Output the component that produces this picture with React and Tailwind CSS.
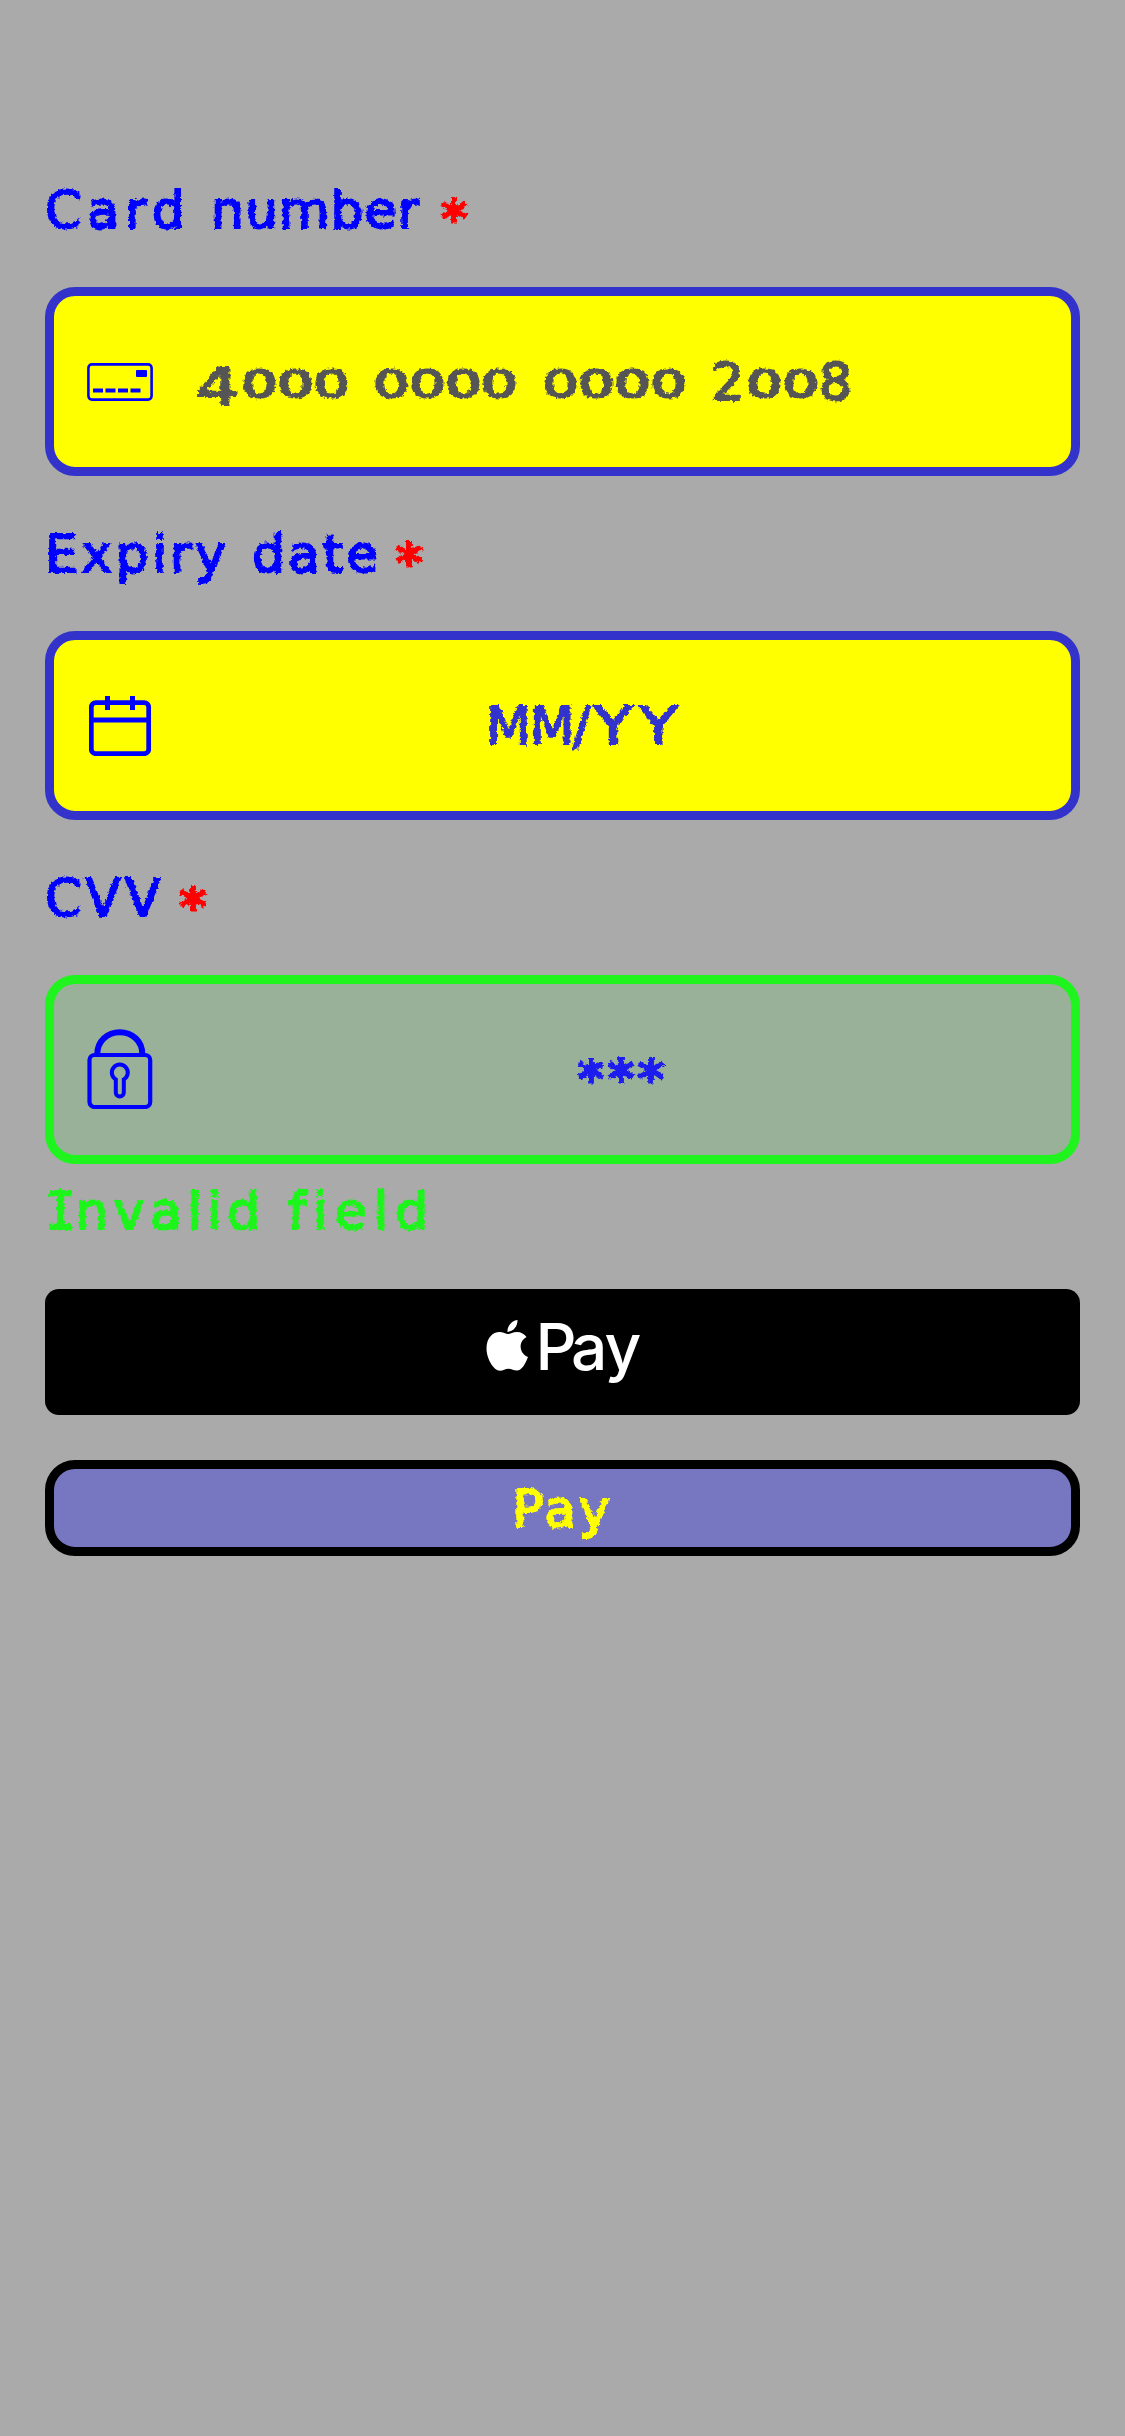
import React from "react";

const chalk =
  "font-['DejaVu_Sans',sans-serif] text-[52px] leading-[60px] whitespace-pre [filter:url(#chalk)]";

function ChalkFilter() {
  return (
    <svg width="0" height="0" className="absolute" aria-hidden="true">
      <filter id="chalk" x="-5%" y="-20%" width="110%" height="140%">
        <feTurbulence type="fractalNoise" baseFrequency="0.3" numOctaves="2" seed="4" result="noise" />
        <feDisplacementMap in="SourceGraphic" in2="noise" scale="5" xChannelSelector="R" yChannelSelector="G" />
      </filter>
    </svg>
  );
}

function Star({ className = "" }) {
  return <span className={`inline-block w-[30px] translate-x-px translate-y-[9px] [-webkit-text-stroke:3px_currentColor] ${className}`}>*</span>;
}

function Label({ words }) {
  return (
    <div className={`${chalk} flex h-[155px] pt-[48px] text-[#0000ff] [-webkit-text-stroke:2px_currentColor]`}>
      {words.map(([text, cls]) => (
        <span key={text} className={cls}>{text}</span>
      ))}
      <Star className="text-[#ff0000]" />
    </div>
  );
}

function Field({ className, icon, children }) {
  return (
    <div className={`flex h-[189px] items-center rounded-[30px] border-[9px] ${className}`}>
      <div className="ml-[33px] flex w-[66px] shrink-0 justify-center">{icon}</div>
      {children}
    </div>
  );
}

function CardIcon() {
  return (
    <svg width="66" height="38" viewBox="0 0 66 38" fill="none" className="block">
      <rect x="1.4" y="1.4" width="63.2" height="35.2" rx="3.5" stroke="#0000ff" strokeWidth="2.6" />
      <rect x="49" y="7" width="11" height="7" rx="1" fill="#0000ff" />
      <path d="M6 25.5h10v4H6zM18.5 25.5h10v4h-10zM31 25.5h10v4H31zM43.5 25.5h10v4h-10z" fill="#0000ff" />
    </svg>
  );
}

function CalendarIcon() {
  return (
    <svg width="62" height="60" viewBox="0 0 62 60" fill="none" stroke="#0000ff" className="block">
      <rect x="2.3" y="6.7" width="57.4" height="51" rx="4.5" strokeWidth="4.8" />
      <path d="M2 24h58" strokeWidth="5.2" />
      <path d="M18.5 0v14M43.5 0v14" strokeWidth="5" />
    </svg>
  );
}

function LockIcon() {
  return (
    <svg width="66" height="80" viewBox="0 0 66 80" fill="none" stroke="#0000ff" className="mb-[2px] block">
      <path d="M10.3 25C10.3 12 20.5 3.2 32.8 3.2S55.3 12 55.3 25" strokeWidth="6" />
      <rect x="2.5" y="26" width="60.7" height="52" rx="5" strokeWidth="4.2" />
      <path d="M28.8 50.5A8 8 0 1 1 36.8 50.5V63.5a4 4 0 0 1-8 0Z" strokeWidth="4" />
    </svg>
  );
}

function ApplePayLogo() {
  return (
    <svg width="156" height="80" viewBox="0 0 156 80" fill="#fff" className="block overflow-visible">
      <path d="M32.5 0C32.8 6 28.5 11.6 22.5 11.9C22.1 6 27 0.6 32.5 0Z" />
      <path d="M23 14C25.5 14 28 12 32 12C36 12 39.5 14 41.5 17C32.5 22 34.5 34 43 37C40.5 44 36.5 50.5 32 50.5C28.5 50.5 27 48.7 23.5 48.7C20 48.7 18.3 50.7 15 50.7C8.5 50.7 1.5 38.5 1.5 28.5C1.5 17.5 8 12 14.5 12C18 12 21 14 23 14Z" />
      <text x="50.5 86 119.5" y="50" fontSize="64" fontFamily="Inter, sans-serif" fontWeight="500">Pay</text>
    </svg>
  );
}

function Digits({ text, className }) {
  return (
    <span className={`flex ${className}`}>
      {text.split("").map((d, i) =>
        d === "0" ? (
          <span key={i} className="w-[36px] origin-[50%_48px] translate-x-px -translate-y-[3px] scale-x-110 scale-y-[0.7] [-webkit-text-stroke:3px_currentColor]">0</span>
        ) : d === "4" ? (
          <span key={i} className="w-[46px] origin-[0%_48px] translate-y-[5px] scale-x-[1.3]">4</span>
        ) : (
          <span key={i} className="w-[36px]">{d}</span>
        )
      )}
    </span>
  );
}

export default function App() {
  return (
    <main className="min-h-[2436px] w-full bg-[#aaaaaa] px-[45px] pt-[132px]">
      <ChalkFilter />

      <Label words={[["Card", "w-[166px] tracking-[6px]"], ["number", "w-[229px] tracking-[1px]"]]} />
      <Field className="border-[#3333cc] bg-[#ffff00]" icon={<CardIcon />}>
        <div className={`${chalk} ml-[43px] flex text-[#555555] [-webkit-text-stroke:2px_currentColor]`}>
          <Digits text="4000" className="w-[178px]" />
          <Digits text="0000" className="w-[169px]" />
          <Digits text="0000" className="w-[168px]" />
          <Digits text="2008" className="w-[150px]" />
        </div>
      </Field>

      <Label words={[["Expiry", "w-[207px] tracking-[3.5px]"], ["date", "w-[143px] tracking-[3px]"]]} />
      <Field className="border-[#3333cc] bg-[#ffff00]" icon={<CalendarIcon />}>
        <div className={`${chalk} ml-[333px] flex text-[#3333cc] [-webkit-text-stroke:2px_currentColor]`}>
          <span className="w-[87px] tracking-[-1px]">MM</span>
          <span className="w-[21px]">/</span>
          <span className="origin-left scale-x-[1.2] tracking-[6px]">YY</span>
        </div>
      </Field>

      <Label words={[["CVV", "w-[134px] tracking-[4px]"]]} />
      <Field className="border-[#1ff41f] bg-[#99b199]" icon={<LockIcon />}>
        <div className={`${chalk} ml-[424px] flex text-[#1f1fee]`}>
          <Star />
          <Star />
          <Star />
        </div>
      </Field>

      <div className={`${chalk} flex h-[125px] pt-[17px] text-[#1ff41f] [-webkit-text-stroke:2px_currentColor]`}>
        <span className="w-[239px] tracking-[5.5px]">
          <span className="font-['DejaVu_Sans_Mono',monospace] tracking-[-1px]">I</span>nvalid
        </span>
        <span className="ml-[4px] tracking-[7px]">field</span>
      </div>

      <button className="flex h-[126px] w-full justify-center rounded-[14px] bg-black pt-[31px]">
        <ApplePayLogo />
      </button>

      <button className="mt-[45px] flex h-[96px] w-full justify-center rounded-[30px] border-[9px] border-black bg-[#7777c1] pt-[10px]">
        <span className={`${chalk} text-[#ffff00] tracking-[3px] [-webkit-text-stroke:2px_currentColor]`}>Pay</span>
      </button>
    </main>
  );
}
